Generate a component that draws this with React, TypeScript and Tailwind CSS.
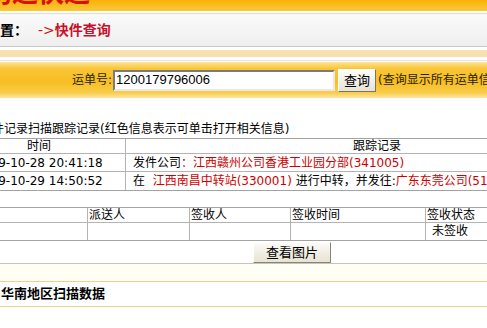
import React from "react";

// 快件查询 page (cropped view)

const red = "text-[#d00000]";

const trackRows = [
  {
    time: "2009-10-28 20:41:18",
    body: (
      <>
        发件公司<span className={red}>：江西赣州公司香港工业园分部(341005)</span>
      </>
    ),
  },
  {
    time: "2009-10-29 14:50:52",
    body: (
      <>
        在&nbsp;&nbsp;<span className={red}>江西南昌中转站(330001)</span> 进行中转，并发往:
        <span className={red}>广东东莞公司(518000)</span>
      </>
    ),
  },
];

const signCols = ["", "派送人", "签收人", "签收时间", "签收状态"];

export default function App() {
  return (
    <div className="w-[487px] h-[328px] overflow-hidden bg-white text-black font-['DejaVu_Sans','Noto_Sans_CJK_SC',sans-serif] text-[12px]">
      {/* top banner */}
      <div className="h-[11px] overflow-hidden bg-gradient-to-b from-[#f6b200] to-[#fbc935]">
        <div className="-mt-[22px] -ml-[14px] whitespace-nowrap text-[26px] font-bold leading-[30px] text-[#d81010]">
          韵达快递
        </div>
      </div>
      <div className="h-[3px] bg-white border-b border-[#dedede]" />

      {/* location bar */}
      <div className="h-[33px] flex items-center bg-gradient-to-b from-[#fafafa] to-[#efefef] border-b border-[#c9c9c9] whitespace-nowrap text-[14px] font-bold">
        <span className="-ml-[42px] shrink-0">当前位置：</span>
        <span className="ml-[10px] shrink-0 font-normal text-[#cc1020]">-&gt;</span>
        <span className="shrink-0 text-[#c8102a]">快件查询</span>
      </div>
      <div className="h-[3px]" />
      <div className="h-[7px] bg-[#f8e1b0]" />
      <div className="h-[3px]" />
      <div className="h-[1px] bg-[#e4e4e4]" />
      <div className="h-[1px]" />

      {/* search bar */}
      <div className="h-[36px] flex items-center whitespace-nowrap bg-[linear-gradient(to_bottom,#fde49a_0%,#f9c637_18%,#f7be22_55%,#f9cc48_85%,#fde6a6_100%)]">
        <span className="ml-[72px] shrink-0 text-[#2a1e00]">运单号:</span>
        <div className="ml-[1px] shrink-0 w-[222px] h-[21px] bg-white border-2 border-t-[#7a7a7a] border-l-[#7a7a7a] border-b-[#e8e8e8] border-r-[#e8e8e8] flex items-center pl-[1px] font-['Liberation_Sans',sans-serif] text-[13px]">
          1200179796006
        </div>
        <button className="ml-[3px] shrink-0 w-[38px] h-[23px] bg-gradient-to-b from-[#fdfdfb] to-[#e6e2d4] border border-t-[#fff] border-l-[#fff] border-b-[#7a7560] border-r-[#7a7560] text-[13px] leading-none">
          查询
        </button>
        <span className="ml-[2px] shrink-0 text-[#2a1e00]">(查询显示所有运单信息)</span>
      </div>

      <div className="h-[23px]" />
      <div className="h-[16px] leading-[16px] whitespace-nowrap -ml-[20px]">
        快件记录扫描跟踪记录(红色信息表示可单击打开相关信息)
      </div>
      <div className="h-[1px]" />

      {/* tracking table */}
      <div className="-ml-[48px] w-[677px] border border-[#a3a3a3] whitespace-nowrap">
        <div className="grid grid-cols-[173px_1fr] h-[15px] leading-[14px] border-b border-[#b4b4b4]">
          <div className="text-center border-r border-[#b4b4b4]">时间</div>
          <div className="text-center">跟踪记录</div>
        </div>
        {trackRows.map((r, i) => (
          <div
            key={i}
            className={`grid grid-cols-[173px_1fr] h-[18px] leading-[18px] ${i === 0 ? "border-b border-[#b4b4b4]" : ""}`}
          >
            <div className="text-center border-r border-[#b4b4b4]">{r.time}</div>
            <div className="pl-[7px]">{r.body}</div>
          </div>
        ))}
      </div>

      <div className="h-[16px]" />

      {/* sign table */}
      <div className="-ml-[13px] w-[620px] border border-[#a3a3a3] whitespace-nowrap">
        <div className="grid grid-cols-[100px_102px_101px_135px_1fr] h-[15px] leading-[14px] border-b border-[#b4b4b4]">
          {signCols.map((c, i) => (
            <div key={i} className={`pl-[1px] ${i < 4 ? "border-r border-[#b4b4b4]" : ""}`}>
              {c}
            </div>
          ))}
        </div>
        <div className="grid grid-cols-[100px_102px_101px_135px_1fr] h-[17px] leading-[17px]">
          <div className="border-r border-[#b4b4b4]" />
          <div className="border-r border-[#b4b4b4]" />
          <div className="border-r border-[#b4b4b4]" />
          <div className="border-r border-[#b4b4b4]" />
          <div className="pl-[6px]">未签收</div>
        </div>
      </div>

      <div className="h-[1px]" />
      <button className="ml-[253px] block w-[78px] h-[21px] bg-gradient-to-b from-[#fbfaf6] to-[#e7e3d3] border border-t-[#fff] border-l-[#fff] border-b-[#8a8570] border-r-[#8a8570] text-[13px] leading-none">
        查看图片
      </button>
      <div className="h-[1px] bg-[#c4c4c4]" />

      {/* region section */}
      <div className="h-[17px] bg-[#fffef4]" />
      <div className="h-[1px] bg-[#e3d78c]" />
      <div className="h-[24px] flex items-center pl-[1px] text-[13px] font-bold whitespace-nowrap">
        华南地区扫描数据
      </div>
      <div className="h-[1px] bg-[#e3d78c]" />
    </div>
  );
}
